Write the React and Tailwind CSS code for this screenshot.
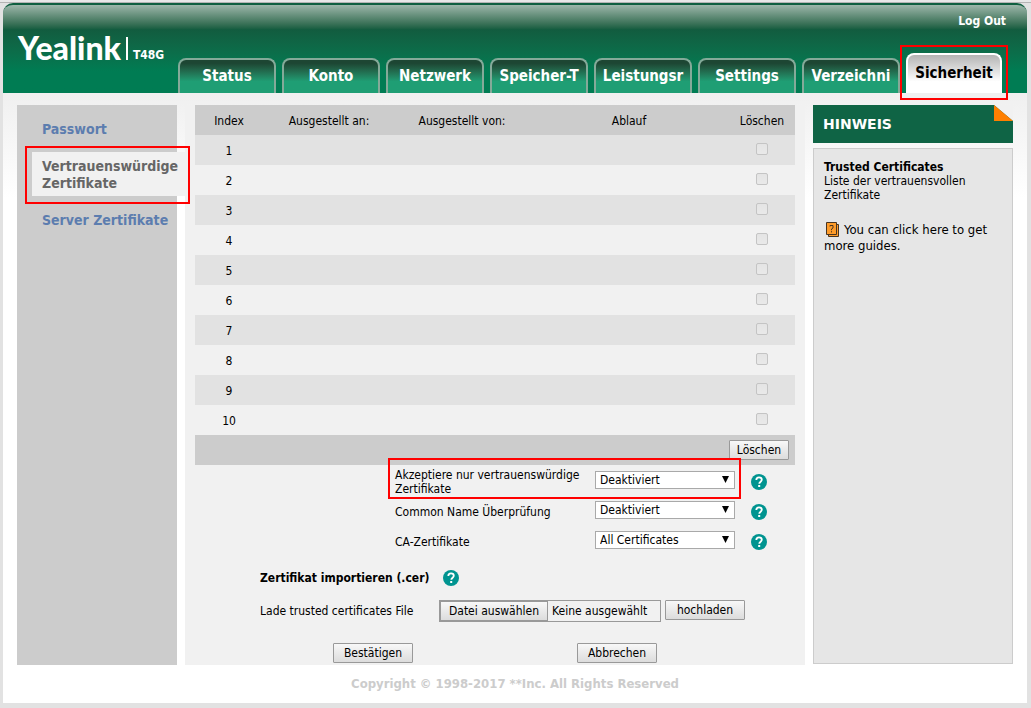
import React from "react";

const tabs = ["Status", "Konto", "Netzwerk", "Speicher-T", "Leistungsr", "Settings", "Verzeichni"];
const rows = Array.from({ length: 10 }, (_, i) => i + 1);
const buttonStyle =
  "h-5 rounded-[1px] border border-[#999] bg-linear-to-b from-[#f8f8f8] to-[#dcdcdc] text-center leading-[19px]";

function Highlight({ className }) {
  return <span aria-hidden="true" className={`pointer-events-none absolute border-2 border-[#f00] ${className}`} />;
}

function HelpIcon() {
  return (
    <svg viewBox="0 0 16 16" className="size-4 shrink-0" role="img" aria-label="Hilfe">
      <circle cx="8" cy="8" r="8" fill="#009490" />
      <path d="M5.3 6.1C5.3 4.4 6.4 3.4 8 3.4s2.8.9 2.8 2.400c0 1.900-2.500 1.900-2.500 4" fill="none" stroke="#fff" strokeWidth="1.8" />
      <rect x="7.200" y="11" width="2" height="2" fill="#fff" />
    </svg>
  );
}

function GuideIcon() {
  return (
    <svg viewBox="0 0 14 15" className="mr-1 ml-[2px] inline-block h-[15px] w-[14px] align-[-3px]" aria-hidden="true">
      <path d="M2.500 2.500h10v12h-10z" fill="#ff9c2a" stroke="#4a3520" />
      <path d="M.5.5h10v12H.5z" fill="#ff9c2a" stroke="#4a3520" />
      <path d="M4 4.500V3.500h3v2.500L5.500 7v1.200M5.500 9.200v1.200" fill="none" stroke="#4a3520" />
    </svg>
  );
}

function SelectRow({ id, label, value, marked }) {
  return (
    <div className="relative flex h-[30px] items-start pl-[200px]">
      <label htmlFor={id} className={`w-[200px] shrink-0 leading-[14px] ${marked ? "pt-[3px]" : "pt-[10px]"}`}>
        {label}
      </label>
      <div className="relative mt-[6px] w-[140px]">
        <select id={id} className="block h-[18px] w-full appearance-none border border-[#a9a9a9] bg-white pl-1 leading-4">
          <option>{value}</option>
        </select>
        <svg viewBox="0 0 7 7" className="pointer-events-none absolute top-[5px] right-[6px] size-[7px]" aria-hidden="true">
          <path d="M0 0h7L3.500 7z" fill="#000" />
        </svg>
      </div>
      <div className="mt-[9px] ml-4">
        <HelpIcon />
      </div>
      {marked && <Highlight className="-top-[7px] left-[193px] h-[41px] w-[353px]" />}
    </div>
  );
}

export default function App() {
  return (
    <div className="min-h-screen bg-[#e2e2e2] pt-[3px] pr-1 pb-[5px] pl-[3px] font-['DejaVu_Sans_Condensed','DejaVu_Sans',sans-serif] text-[12px] text-black shadow-[inset_0_2px_0_#e8e8e8,inset_0_3px_0_#b4b4b4]">
      <div className="rounded-t-[10px] bg-linear-to-b from-[#f0f0f0] from-[93px] to-white to-[195px]">
        <header className="flex h-[90px] flex-col rounded-t-[10px] border-t-2 border-[#0f5f40] bg-linear-to-b from-[#9db7ab] from-0% via-[#125c3f] via-28% to-[#007c53] to-75%">
          <div className="flex h-8 justify-end pt-[8px] pr-[21px]">
            <a href="#logout" className="font-bold leading-4 text-white">Log Out</a>
          </div>
          <div className="flex flex-1 items-stretch">
            <div className="-mt-1 flex h-8 items-start pl-[15px] text-white">
              <span className="font-['Lato',sans-serif] text-[32px] leading-[30px] font-black">Yealink</span>
              <span className="mt-1 ml-[5px] h-[23px] w-[2px] bg-white" />
              <span className="mt-[14px] ml-[5px] leading-4 font-bold">T48G</span>
            </div>
            <nav className="relative ml-auto flex items-end gap-[6px] pr-[25px] text-center text-[15px] font-bold">
              {tabs.map((t) => (
                <a
                  key={t}
                  href={`#${t}`}
                  className="h-[35px] w-[98px] overflow-hidden rounded-t-[8px] border-2 border-b-0 border-[#84aa99] bg-linear-to-b from-[#1d4633] from-10% to-[#1f9e74] to-65% px-[6px] leading-8 whitespace-nowrap text-white"
                >
                  <span className="block overflow-hidden">{t}</span>
                </a>
              ))}
              <a
                href="#sicherheit"
                aria-current="page"
                className="h-10 w-24 rounded-t-[8px] border-2 border-b-0 border-white bg-linear-to-b from-[#b4b4b4] to-white to-70% leading-9"
              >
                Sicherheit
              </a>
              <Highlight className="right-[19px] -bottom-[7px] h-[55px] w-[108px]" />
            </nav>
          </div>
        </header>

        <div className="flex gap-2 px-[14px] pt-3">
          <nav className="relative w-40 shrink-0 bg-[#ccc] pt-4 text-[14px] leading-[17px] font-bold text-[#5c7daf]">
            <a href="#passwort" className="block pl-[25px]">Passwort</a>
            <a href="#zertifikate" aria-current="page" className="-mr-[8px] mt-[14px] ml-[15px] block bg-[#f1f1f1] pt-[6px] pb-[4px] pl-[10px] text-[#666]">
              Vertrauenswürdige Zertifikate
            </a>
            <a href="#server" className="mt-4 block pl-[25px]">Server Zertifikate</a>
            <Highlight className="top-[41px] left-2 h-[58px] w-[165px]" />
          </nav>

          <main className="flex-1 bg-[#f1f1f1] px-[10px] pb-[2px]">
            <table className="w-full table-fixed border-collapse text-center">
              <colgroup>
                <col className="w-[68px]" />
                <col className="w-[132px]" />
                <col className="w-[134px]" />
                <col />
                <col className="w-[66px]" />
              </colgroup>
              <thead>
                <tr className="h-[30px] bg-[#ccc]">
                  {["Index", "Ausgestellt an:", "Ausgestellt von:", "Ablauf", "Löschen"].map((h) => (
                    <th key={h} className="p-0 pt-[2px] font-normal">{h}</th>
                  ))}
                </tr>
              </thead>
              <tbody>
                {rows.map((n) => (
                  <tr key={n} className="h-[30px] odd:bg-[#e2e2e2]">
                    <td className="p-0 pt-[2px]">{n}</td>
                    <td />
                    <td />
                    <td />
                    <td className="p-0 pb-[2px]">
                      <input
                        type="checkbox"
                        disabled
                        aria-label={`Zertifikat ${n} löschen`}
                        className="mx-auto block size-3 appearance-none rounded-[2px] border border-[#c4c4c4] bg-linear-to-b from-[#e4e4e4] to-[#e9e9e9]"
                      />
                    </td>
                  </tr>
                ))}
              </tbody>
              <tfoot>
                <tr className="h-[30px] bg-[#ccc]">
                  <td colSpan={5} className="p-0 pr-[6px]">
                    <button className={`${buttonStyle} ml-auto block w-[60px]`}>Löschen</button>
                  </td>
                </tr>
              </tfoot>
            </table>

            <form onSubmit={(e) => e.preventDefault()}>
              <SelectRow id="accept" label="Akzeptiere nur vertrauenswürdige Zertifikate" value="Deaktiviert" marked />
              <SelectRow id="common" label="Common Name Überprüfung" value="Deaktiviert" />
              <SelectRow id="ca" label="CA-Zertifikate" value="All Certificates" />

              <div className="mt-[15px] flex h-4 items-center gap-[14px] pl-[65px]">
                <h2 className="font-bold">Zertifikat importieren (.cer)</h2>
                <HelpIcon />
              </div>
              <div className="mt-[14px] flex h-[22px] items-start pl-[65px]">
                <label htmlFor="file" className="w-[179px] shrink-0 leading-[22px]">Lade trusted certificates File</label>
                <label className="relative mr-1 flex h-[22px] w-[222px] border border-[#999] leading-5">
                  <input id="file" type="file" className="sr-only" />
                  <span className="w-[108px] border border-[#999] bg-linear-to-b from-[#f8f8f8] to-[#dcdcdc] text-center leading-[18px]">
                    Datei auswählen
                  </span>
                  <span className="pl-1">Keine ausgewählt</span>
                </label>
                <button className={`${buttonStyle} w-20`}>hochladen</button>
              </div>
              <div className="mt-[21px] flex gap-[164px] pl-[138px]">
                <button className={`${buttonStyle} w-20`}>Bestätigen</button>
                <button className={`${buttonStyle} w-20`}>Abbrechen</button>
              </div>
            </form>
          </main>

          <aside className="flex w-[200px] shrink-0 flex-col gap-[5px] pb-px">
            <div className="relative bg-[#0f6445] pl-[10px] font-['DejaVu_Sans',sans-serif] text-[14px] leading-[38px] font-bold text-white">
              <h2>HINWEIS</h2>
              <svg viewBox="0 0 19 16" className="absolute top-0 right-0 h-4 w-[19px]" aria-hidden="true">
                <path d="M0 0h19v16z" fill="#f1f1f1" />
                <path d="M0 0v16h19z" fill="#ff7f00" />
              </svg>
            </div>
            <div className="flex-1 border border-[#ccc] bg-[#e6e6e6] px-[10px] pt-[11px] leading-[14px]">
              <h3 className="font-bold">Trusted Certificates</h3>
              <p>Liste der vertrauensvollen Zertifikate</p>
              <a href="#guides" className="mt-5 block text-[13px] leading-4">
                <GuideIcon />You can click here to get more guides.
              </a>
            </div>
          </aside>
        </div>

        <footer className="pt-[11px] pb-[11px] text-center text-[13px] leading-4 font-bold text-[#ccc]">
          Copyright © 1998-2017 **Inc. All Rights Reserved
        </footer>
      </div>
    </div>
  );
}
